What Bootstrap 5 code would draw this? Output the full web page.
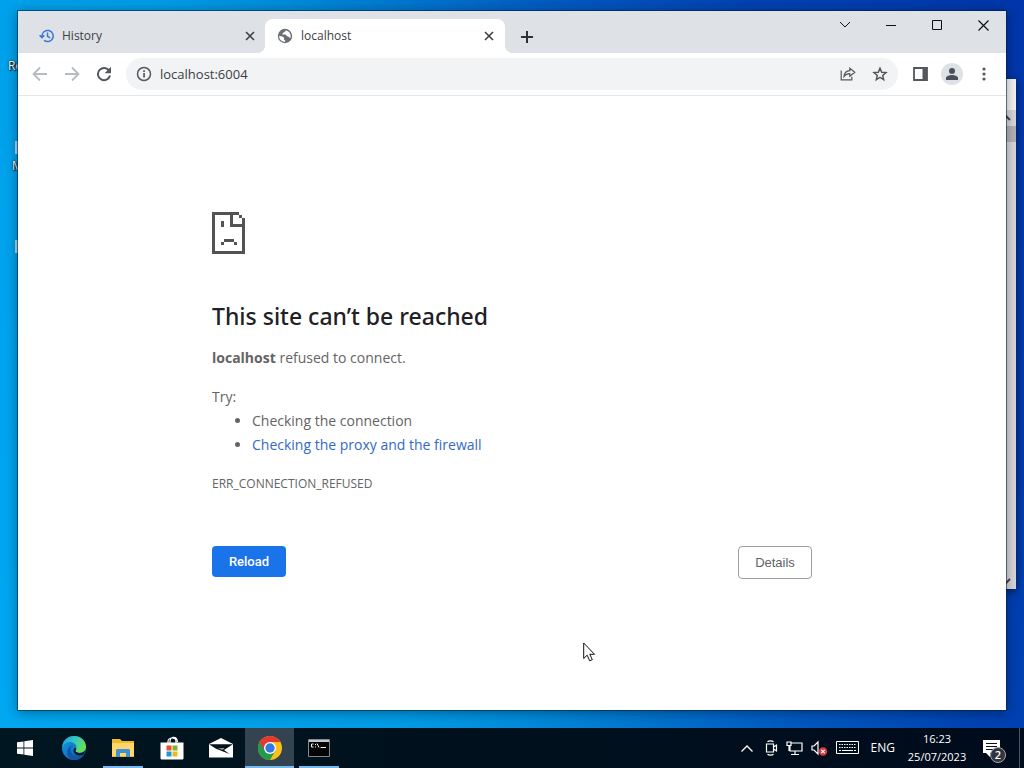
<!DOCTYPE html>
<html lang="en">
<head>
<meta charset="utf-8">
<meta name="viewport" content="width=device-width, initial-scale=1">
<title>localhost</title>
<link href="https://cdn.jsdelivr.net/npm/bootstrap@5.3.0/dist/css/bootstrap.min.css" rel="stylesheet">
<style>
  body { font-family: "Open Sans", "Noto Sans", sans-serif; font-size: 12px; line-height: 16px; }
  svg { display: block; flex: none; }
  button { border: 0; padding: 0; background: none; color: inherit; }
  .desktop { background: linear-gradient(72deg, #00a8f2 0%, #009ce6 32%, #008cda 42%, #0074ce 52%, #0058c0 64%, #0042b2 78%, #0036aa 100%); }
  .desk-label { left: 8px; color: #fff; text-shadow: 1px 1px 1px #000, 0 0 2px #000; font-size: 12px; }
  .label-bin { top: 58px; }
  .label-edge { top: 158px; left: 12px; }
  .desk-chip { left: 15px; width: 3px; height: 13px; background: #a9d8f2; }
  .chip-one { top: 141px; }
  .chip-two { top: 240px; }
  .back-window { right: 8px; top: 79px; width: 40px; height: 510px; background: #d9d9dc; box-shadow: 0 2px 8px rgba(0,0,0,.6); }
  .back-window .title-part { height: 31px; background: #f4f4f5; }
  .back-window .thumb { height: 16px; background: #b4b4b6; }
  .browser { margin: 11px 18px 18px; box-shadow: 0 0 0 1px rgba(0,30,60,.55), 0 2px 12px rgba(0,0,0,.4); }
  .tabstrip { background: #dee1e6; height: 42px; color: #3c4043; }
  .tab-item { width: 240px; height: 34px; padding: 0 11px 0 12px; gap: 8px; }
  .tab-first { width: 239px; margin-left: 8px; padding: 0 10px 0 13px; }
  .tab-active { background: #fff; border-radius: 8px 8px 0 0; }
  .tab-active::before, .tab-active::after { content: ""; position: absolute; bottom: 0; width: 8px; height: 8px; }
  .tab-active::before { left: -8px; background: radial-gradient(circle at 0 0, transparent 8px, #fff 8px); }
  .tab-active::after { right: -8px; background: radial-gradient(circle at 100% 0, transparent 8px, #fff 8px); }
  .new-tab { margin-left: 6px; }
  .win-btn { width: 46px; height: 28px; color: #111; }
  .toolbar { height: 43px; border-bottom: 1px solid #e3e5e8; color: #54585d; padding: 0 6px; }
  .tool-btn { width: 32px; height: 32px; }
  .omnibox { background: #f1f3f4; border-radius: 16px; height: 32px; padding: 0 2px 0 10px; margin: 0 6px 0 6px; }
  .omnibox input { border: 0; outline: 0; background: transparent; font-size: 13px; color: #3c4043; padding: 0; min-width: 0; }
  .omnibox svg { color: #54585d; }
  .avatar { width: 22px; height: 22px; background: #dee1e6; }
  .error-body { max-width: 600px; padding-top: 116px; color: #646464; font-size: 14px; line-height: 24px; }
  .error-title { font-size: 23px; line-height: 30px; font-weight: 500; color: #202124; font-family: "Noto Sans", sans-serif; margin: 47px 0 15px; }
  .error-lead { margin-bottom: 15px; }
  .error-body ul { padding-left: 40px; margin: 0; }
  .error-body a { color: #3369c8; text-decoration: none; }
  .error-code { font-size: 12px; margin: 15px 0 50px; }
  .btn-reload, .btn-details { font: 13px/15px "Liberation Sans", sans-serif; border-radius: 4px; width: 74px; padding: 8px 0; }
  .btn-reload { background: #1a73e8; color: #fff; font-family: Roboto, sans-serif; font-weight: 500; border: 0; }
  .btn-reload:hover { background: #1765cc; color: #fff; }
  .btn-details { border: 1px solid #9b9ea2; color: #5f6368; background: #fff; }
  .pointer { left: 583px; top: 642px; }
  .taskbar { height: 40px; background: linear-gradient(90deg, #001621, #00111d 45%, #000b1c); color: #fff; }
  .start-btn { width: 49px; }
  .task-btn { width: 49px; }
  .task-btn.running::after { content: ""; position: absolute; bottom: 0; left: 5px; right: 4px; height: 2px; background: #76b9ed; }
  .task-btn.current { background: #33434f; }
  .task-btn.current::after { left: 0; right: 0; }
  .clock { width: 60px; font-size: 11px; line-height: 18px; }
  .tray { gap: 8px; }
  .note-btn { margin: 0 19px 0 8px; }
  .show-desktop { width: 5px; border-left: 1px solid #4a5563; }
  .note-count { left: 7px; top: 7px; width: 16px; height: 16px; border: 1px solid #a3a8ad; background: #30363c; font-size: 11px; line-height: 14px; font-weight: 600; }
</style>
</head>
<body>
<div class="desktop vh-100 d-flex flex-column position-relative overflow-hidden">
  <span class="desk-label label-bin position-absolute">Re</span>
  <span class="desk-label label-edge position-absolute">M</span>
  <span class="desk-chip chip-one position-absolute"></span>
  <span class="desk-chip chip-two position-absolute"></span>

  <div class="back-window position-absolute d-flex flex-column">
    <div class="title-part"></div>
    <div class="d-flex justify-content-end pe-1"><svg width="12" height="16" viewBox="0 0 12 16" fill="none" stroke="#444" stroke-width="2"><path d="M2 10l4-4 4 4"/></svg></div>
    <div class="thumb"></div>
    <div class="mt-auto d-flex justify-content-end pe-1"><svg width="12" height="16" viewBox="0 0 12 16" fill="none" stroke="#444" stroke-width="2"><path d="M2 6l4 4 4-4"/></svg></div>
  </div>

  <main class="browser bg-white flex-grow-1 d-flex flex-column position-relative">
    <div class="tabstrip d-flex align-items-end">
      <div class="tab-item tab-first d-flex align-items-center">
        <svg width="15" height="14" viewBox="0 0 15 14" fill="none" stroke="#3b78d6" stroke-width="1.5"><path d="M3 8.200V6.800a5.600 5.600 0 1 1 2 4.500M.6 6.200L3 8.600l2.400-2.400M8.500 3.600v3.700l2.700 1.600"/></svg>
        <span class="flex-grow-1">History</span>
        <button aria-label="Close History"><svg width="10" height="10" viewBox="0 0 10 10" stroke="#3c4043" stroke-width="1.600"><path d="M1 1l8 8M9 1L1 9"/></svg></button>
      </div>
      <div class="tab-item tab-active d-flex align-items-center position-relative">
        <svg width="16" height="16" viewBox="0 0 16 16"><circle cx="8" cy="8" r="7.200" fill="#6b6e72"/><path d="M2.200 7.800C4.500 8.400 6.800 8.700 7 10v1.400l1.200 1.200v1.200C4.800 14 1.900 11.500 2.200 7.800zM8.700 2.300c-.2 1.300-.8 1.600-2.100 1.900-.2 1.300-1 1.300-1.700 1.700.6.8 2.200.4 3.600.6 1 .3.8 1.600 1.800 1.800 1.100.2 1.700.5 1.900 1.300l1.300.4c.8-3.800-1.200-7-4.800-7.700z" fill="#fff"/></svg>
        <span class="flex-grow-1">localhost</span>
        <button aria-label="Close localhost"><svg width="10" height="10" viewBox="0 0 10 10" stroke="#3c4043" stroke-width="1.600"><path d="M1 1l8 8M9 1L1 9"/></svg></button>
      </div>
      <button class="new-tab tool-btn d-flex align-items-center justify-content-center" aria-label="New tab"><svg width="12" height="12" viewBox="0 0 12 12" stroke="#303134" stroke-width="2"><path d="M6 0v12M0 6h12"/></svg></button>
      <div class="ms-auto d-flex align-self-start">
        <button class="win-btn d-flex align-items-center justify-content-center" aria-label="Search tabs"><svg width="12" height="8" viewBox="0 0 12 8" fill="none" stroke="currentColor"><path d="M1 1l5 5 5-5"/></svg></button>
        <button class="win-btn d-flex align-items-center justify-content-center" aria-label="Minimise"><svg width="10" height="10" viewBox="0 0 10 10" stroke="currentColor"><path d="M0 5.500h10"/></svg></button>
        <button class="win-btn d-flex align-items-center justify-content-center" aria-label="Maximise"><svg width="10" height="10" viewBox="0 0 10 10" fill="none" stroke="currentColor"><path d="M.5.5h9v9h-9z"/></svg></button>
        <button class="win-btn d-flex align-items-center justify-content-center" aria-label="Close"><svg width="11" height="11" viewBox="0 0 11 11" stroke="currentColor" stroke-width="1.200"><path d="M.5.500l10 10M10.500.500l-10 10"/></svg></button>
      </div>
    </div>

    <div class="toolbar d-flex align-items-center">
      <button class="tool-btn d-flex align-items-center justify-content-center" aria-label="Back"><svg width="16" height="16" viewBox="0 0 16 16" fill="none" stroke="#b9bcbf" stroke-width="1.800"><path d="M15 8H2M8 1.500L1.500 8 8 14.500"/></svg></button>
      <button class="tool-btn d-flex align-items-center justify-content-center" aria-label="Forward"><svg width="16" height="16" viewBox="0 0 16 16" fill="none" stroke="#b9bcbf" stroke-width="1.800"><path d="M1 8h13M8 1.500L14.500 8 8 14.500"/></svg></button>
      <button class="tool-btn d-flex align-items-center justify-content-center" aria-label="Reload page"><svg width="16" height="16" viewBox="0 0 16 16"><path d="M13.300 5A6.100 6.100 0 1 0 14 9.500" fill="none" stroke="currentColor" stroke-width="2"/><path d="M15 .8v6.400H8.600z" fill="currentColor"/></svg></button>
      <div class="omnibox d-flex align-items-center flex-grow-1">
        <svg width="16" height="16" viewBox="0 0 16 16"><circle cx="8" cy="8" r="6.500" fill="none" stroke="currentColor" stroke-width="1.500"/><path d="M7.200 7h1.700v4.500H7.200zM7.200 4.200h1.700v1.700H7.200z" fill="currentColor"/></svg>
        <input class="flex-grow-1 ms-2" type="text" value="localhost:6004" aria-label="Address">
        <button class="tool-btn d-flex align-items-center justify-content-center" aria-label="Share"><svg width="16" height="16" viewBox="0 0 16 16" fill="none" stroke="currentColor" stroke-width="1.200"><path d="M1.200 4.500v9.300h10.600v-3M4 10.500C4.300 6.800 6.500 4.700 9.800 4.600V2.200L14.800 6.200l-5 4V7.700C7.200 7.700 5.500 8.500 4 10.500z"/></svg></button>
        <button class="tool-btn d-flex align-items-center justify-content-center" aria-label="Bookmark"><svg width="16" height="16" viewBox="0 0 16 16" fill="none" stroke="currentColor" stroke-width="1.500"><path d="M8 2.200l1.700 4 4.300.4-3.300 2.800 1 4.200L8 11.400l-3.700 2.200 1-4.200L2 6.600l4.300-.4z"/></svg></button>
      </div>
      <button class="tool-btn d-flex align-items-center justify-content-center" aria-label="Side panel"><svg width="15" height="14" viewBox="0 0 15 14"><path d="M1 1h13v12H1z" fill="#fff" stroke="currentColor" stroke-width="1.800"/><path d="M9.500 1H14v12H9.500z" fill="currentColor"/></svg></button>
      <button class="tool-btn d-flex align-items-center justify-content-center" aria-label="Profile"><span class="avatar rounded-circle d-flex align-items-center justify-content-center"><svg width="14" height="14" viewBox="0 0 14 14" fill="#4a5059"><circle cx="7" cy="4" r="3"/><path d="M1 13v-2c0-2 3.500-3 6-3s6 1 6 3v2z"/></svg></span></button>
      <button class="tool-btn d-flex align-items-center justify-content-center" aria-label="Menu"><svg width="4" height="14" viewBox="0 0 4 14" fill="currentColor"><circle cx="2" cy="2" r="1.600"/><circle cx="2" cy="7" r="1.600"/><circle cx="2" cy="12" r="1.600"/></svg></button>
    </div>

    <section class="error-body w-100 mx-auto">
      <svg width="33" height="42" viewBox="0 0 33 42" fill="#535353" shape-rendering="crispEdges"><path d="M0 0h27v3H3v36h27V15H18V0h3v12h12v30H0zM27 3h3v3h-3zM30 6h3v6h-3zM9 9h3v6H9zM12 27h10v3H12zM9 30h3v3H9zM22 30h3v3h-3z"/></svg>
      <h1 class="error-title">This site can’t be reached</h1>
      <p class="error-lead"><strong>localhost</strong> refused to connect.</p>
      <p class="m-0">Try:</p>
      <ul>
        <li>Checking the connection</li>
        <li><a href="#details">Checking the proxy and the firewall</a></li>
      </ul>
      <p class="error-code">ERR_CONNECTION_REFUSED</p>
      <div class="d-flex justify-content-between align-items-start" id="details">
        <button class="btn btn-reload">Reload</button>
        <button class="btn btn-details">Details</button>
      </div>
    </section>
  </main>

  <footer class="taskbar d-flex align-items-stretch">
    <button class="start-btn d-flex align-items-center justify-content-center" aria-label="Start"><svg width="16" height="16" viewBox="0 0 16 16" fill="#fff"><path d="M0 2.300l6.500-.9v6.100H0zM7.300 1.300L16 0v7.500H7.300zM0 8.400h6.500v6.200L0 13.700zM7.300 8.400H16V16l-8.700-1.300z"/></svg></button>
    <button class="task-btn d-flex align-items-center justify-content-center" aria-label="Edge">
      <svg width="24" height="24" viewBox="0 0 24 24"><defs><linearGradient id="edgeTop" x1="0" y1="0" x2="1" y2=".5"><stop offset="0" stop-color="#219bdc"/><stop offset=".5" stop-color="#31c6c5"/><stop offset="1" stop-color="#69df55"/></linearGradient><linearGradient id="edgeLow" x1="0" y1="0" x2="1" y2="1"><stop offset="0" stop-color="#1698e4"/><stop offset="1" stop-color="#0b5cb2"/></linearGradient></defs><circle cx="12" cy="12" r="12" fill="url(#edgeLow)"/><path d="M8.500 13c0 5 4.500 7.500 9 6.500 2-.4 3.500-1.300 4.300-.8C20 22 16 24 12 24c-5-.5-8-5-6.500-10C6.500 11 9 9.500 11 9.600 9.500 10.400 8.500 11.500 8.500 13z" fill="#1257a5"/><path d="M.2 11C.8 4.600 5.800 0 12 0c6.800 0 12 4.800 12 10.600 0 4-3 6.300-6.300 6.300-2.900 0-4.300-1-4.300-1.800 0-.7 1.200-1.200 1.200-3.200C14.600 8.500 11.500 6 8 6 4.300 6 1.500 8 .2 11z" fill="url(#edgeTop)"/><path d="M13.600 14.600c-.8 1 .8 2.200 4.100 2.300 2.200 0 4.300-1 5.300-2.500-.4 2-1.100 3.500-2 4.600-4.500 1.500-9.500-.5-9.500-4.500 0-1.300.7-2.300 1.600-2.800 1 .5 1.300 1.900.5 2.900z" fill="#041d2c"/></svg>
    </button>
    <button class="task-btn running position-relative d-flex align-items-center justify-content-center" aria-label="File Explorer"><svg width="22" height="18" viewBox="0 0 22 18"><path d="M0 0h8l2 2h12v16H0z" fill="#f2b92d"/><path d="M0 4h22v13H0z" fill="#ffd76a"/><path d="M4 18v-7l1-1h12l1 1v7h-4v-4H8v4z" fill="#3f91d5"/></svg></button>
    <button class="task-btn d-flex align-items-center justify-content-center" aria-label="Store"><svg width="24" height="24" viewBox="0 0 24 24"><path d="M8 8V5.500C8 .8 16 .8 16 5.500V8M10 8V5.500C10 0 17 0 17.500 6" fill="none" stroke="#fff" stroke-width="1.200"/><path d="M.5 6.500h23V22c0 1-.5 1.500-1.500 1.500H2C1 23.500.5 23 .5 22z" fill="#fff"/><path d="M6.500 9.500h5v5h-5z" fill="#e94f28"/><path d="M12.500 9.500h5v5h-5z" fill="#7eb52b"/><path d="M6.500 15.500h5v5h-5z" fill="#179bd7"/><path d="M12.500 15.500h5v5h-5z" fill="#f5b51e"/></svg></button>
    <button class="task-btn d-flex align-items-center justify-content-center" aria-label="Mail"><svg width="24" height="20" viewBox="0 0 24 20"><path d="M0 6L12 0l12 6v13.500H0z" fill="#fff"/><path d="M0 6.200h24l-9 5.800 5.500 4L7 10.800z" fill="#06131d"/><path d="M8.800 10.800l5 .8 1.700-1.300z" fill="#fff"/></svg></button>
    <button class="task-btn running current position-relative d-flex align-items-center justify-content-center" aria-label="Chrome"><svg width="24" height="24" viewBox="0 0 24 24"><circle cx="12" cy="12" r="12" fill="#fbc116"/><path d="M12 12L1.600 6A12 12 0 0 0 12 24l5.200-9z" fill="#229b4b"/><path d="M1.600 6a12 12 0 0 1 20.800 0H12L6.800 15z" fill="#e23a2e"/><circle cx="12" cy="12" r="6" fill="#fff"/><circle cx="12" cy="12" r="4.700" fill="#3478e5"/></svg></button>
    <button class="task-btn running position-relative d-flex align-items-center justify-content-center" aria-label="Command Prompt"><svg width="22" height="18" viewBox="0 0 22 18"><path d="M.5.5h21v17H.5z" fill="#050505" stroke="#85898c"/><path d="M1 1h20v2H1z" fill="#c4c8cb"/><path d="M5.500 5H3.500v3h2M7.500 5v1M7.500 7.500v1M9 4.500l2 4M12.500 8.500H18" fill="none" stroke="#eee"/></svg></button>

    <div class="tray ms-auto d-flex align-items-center">
      <svg width="12" height="7" viewBox="0 0 12 7" fill="none" stroke="#fff" stroke-width="1.300"><path d="M.5 6.500L6 1l5.500 5.500"/></svg>
      <svg class="ms-1" width="13" height="16" viewBox="0 0 13 16" fill="none" stroke="#fff" stroke-width="1.200"><path d="M1.500 4h7v8h-7zM8.500 7l3-2v6l-3-2M2.500 1.800C4 .5 7 .5 8.500 1.800M2.500 14.200c1.500 1.300 4.500 1.300 6 0"/></svg>
      <svg width="17" height="16" viewBox="0 0 17 16" fill="none" stroke="#fff" stroke-width="1.200"><path d="M5 3h11v8H4V6M5 14.500h8M9 11v3.500M1 2h4v3.500H1zM3 5.500V11"/></svg>
      <svg width="17" height="16" viewBox="0 0 17 16"><path d="M1 6h2l4-4v12L3 10H1z" fill="none" stroke="#fff" stroke-width="1.200"/><circle cx="12" cy="11.500" r="4.200" fill="#d83b46"/><path d="M10.300 9.800l3.400 3.400M13.700 9.800l-3.400 3.400" stroke="#fff" stroke-width="1.200"/></svg>
      <svg width="23" height="14" viewBox="0 0 23 14" fill="none" stroke="#fff"><path d="M.5.500h22v12H.5z"/><path d="M3 3.500h17M3 6.500h17" stroke-dasharray="1.500 1"/><path d="M3 9.500h2M6 9.500h11M18 9.500h2"/></svg>
      <span class="mx-1">ENG</span>
      <div class="clock text-center">16:23<br>25/07/2023</div>
      <button class="note-btn position-relative" aria-label="Notifications"><svg width="17" height="17" viewBox="0 0 17 17"><path d="M0 0h17v13H7v4l-4-4H0z" fill="#fff"/><path d="M3 3.500h11M3 6.500h11M3 9.500h7" stroke="#07111c"/></svg><span class="note-count position-absolute rounded-circle text-center text-white">2</span></button>
    </div>
    <button class="show-desktop" aria-label="Show desktop"></button>
  </footer>

  <svg class="pointer position-absolute" width="14" height="21" viewBox="0 0 14 21"><path d="M.7 1v15.500l3.500-3.300 2.500 5.600 2.600-1.100-2.500-5.400h4.700z" fill="#fff" stroke="#111"/></svg>
</div>
<script src="https://cdn.jsdelivr.net/npm/bootstrap@5.3.0/dist/js/bootstrap.bundle.min.js"></script>
</body>
</html>
